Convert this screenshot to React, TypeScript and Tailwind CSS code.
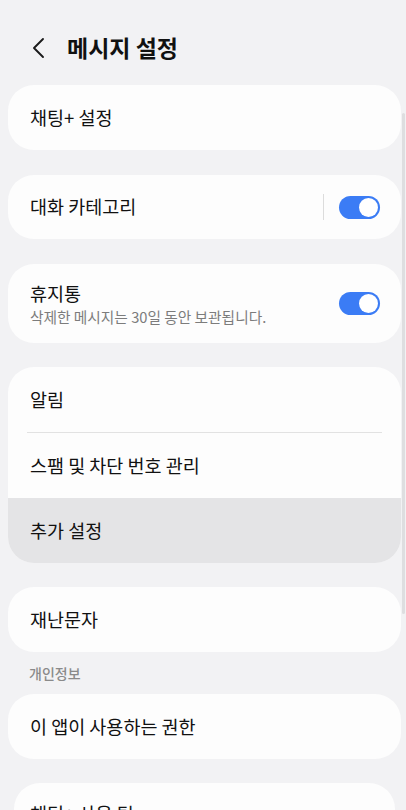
const font = { fontFamily: '"Noto Sans CJK KR", "Noto Sans", sans-serif' };

function Toggle() {
  return (
    <div className="flex h-[23px] w-[41px] items-center justify-end rounded-full bg-[#3b7cf5] px-[2px]">
      <div className="h-[19px] w-[19px] rounded-full bg-white" />
    </div>
  );
}

function Row({ label, active }: { label: string; active?: boolean }) {
  return (
    <div
      className={`flex h-[65px] items-center px-[22px] text-[18.5px] text-[#111] ${
        active ? "bg-[#e4e4e6]" : ""
      }`}
    >
      {label}
    </div>
  );
}

export default function App() {
  return (
    <div
      className="relative h-[810px] w-[406px] overflow-hidden bg-[#f2f2f4]"
      style={font}
    >
      {/* Header */}
      <div className="flex h-[85px] items-center gap-[22px] pl-[31px] pt-[10px]">
        <svg width="14" height="22" viewBox="0 0 14 22" fill="none">
          <path
            d="M12 2L3 11l9 9"
            stroke="#1a1a1a"
            strokeWidth="1.9"
            strokeLinecap="round"
            strokeLinejoin="round"
          />
        </svg>
        <h1 className="text-[23px] font-bold text-[#111]">메시지 설정</h1>
      </div>

      <div className="ml-[8px] mr-[5px] flex flex-col">
        {/* 채팅+ 설정 */}
        <div className="overflow-hidden rounded-[26px] bg-[#fdfdfd]">
          <Row label="채팅+ 설정" />
        </div>

        {/* 대화 카테고리 */}
        <div className="mt-[25px] flex h-[64px] items-center rounded-[26px] bg-[#fdfdfd] pl-[22px] pr-[21px]">
          <span className="flex-1 text-[18.5px] text-[#111]">대화 카테고리</span>
          <div className="mr-[15px] h-[26px] w-px bg-[#dcdcdc]" />
          <Toggle />
        </div>

        {/* 휴지통 */}
        <div className="mt-[25px] flex h-[79px] items-center rounded-[26px] bg-[#fdfdfd] pl-[22px] pr-[21px]">
          <div className="flex flex-1 flex-col">
            <span className="text-[18.5px] leading-[25px] text-[#111]">휴지통</span>
            <span className="text-[14.7px] leading-[21px] text-[#7c7c7c]">
              삭제한 메시지는 30일 동안 보관됩니다.
            </span>
          </div>
          <Toggle />
        </div>

        {/* 알림 group */}
        <div className="mt-[24px] overflow-hidden rounded-[26px] bg-[#fdfdfd]">
          <Row label="알림" />
          <div className="mx-[19px] h-px bg-[#e2e2e2]" />
          <Row label="스팸 및 차단 번호 관리" />
          <Row label="추가 설정" active />
        </div>

        {/* 재난문자 */}
        <div className="mt-[24px] overflow-hidden rounded-[26px] bg-[#fdfdfd]">
          <Row label="재난문자" />
        </div>

        <div className="flex h-[42px] items-center pl-[21px] text-[14px] font-medium text-[#8a8a8a]">
          개인정보
        </div>

        <div className="overflow-hidden rounded-[26px] bg-[#fdfdfd]">
          <Row label="이 앱이 사용하는 권한" />
        </div>

        <div className="mx-[6px] mt-[24px] overflow-hidden rounded-[26px] bg-[#fdfdfd]">
          <div className="h-[65px] pl-[16px] pt-[18px] text-[18.5px] leading-[25px] text-[#111]">
            채팅+ 사용 팁
          </div>
        </div>
      </div>

      {/* Scrollbar */}
      <div className="absolute right-[1px] top-[113px] h-[501px] w-[3px] rounded-full bg-[#dedee0]" />
    </div>
  );
}
